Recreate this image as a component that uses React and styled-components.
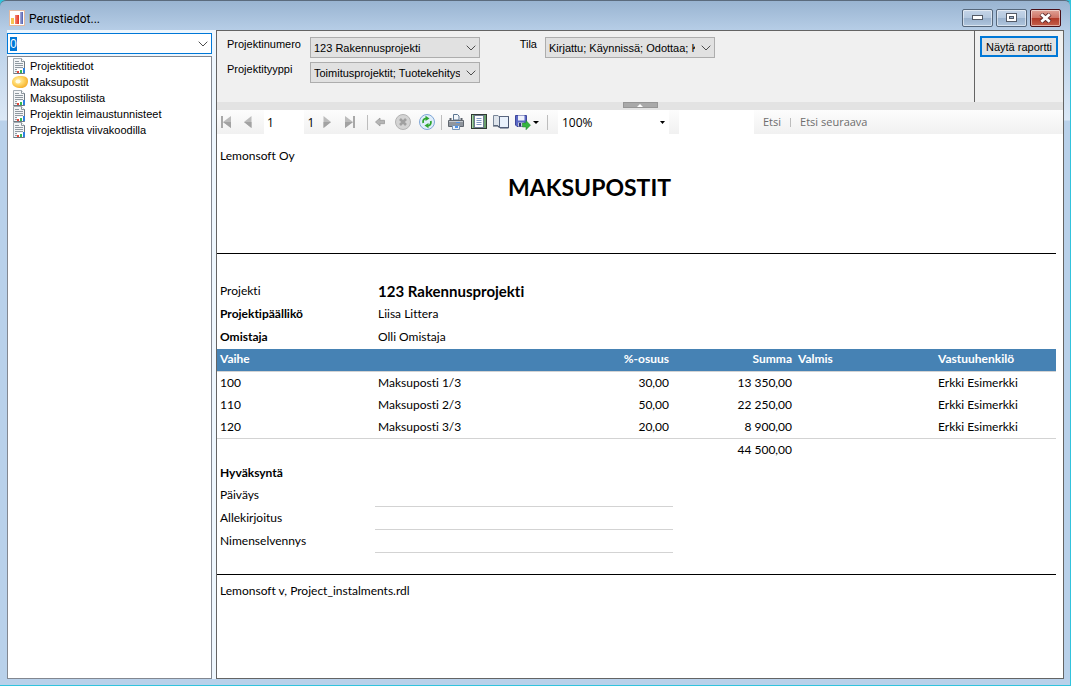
import React, { Component, createRef } from "react";
import styled, { createGlobalStyle } from "styled-components";

const GlobalStyle = createGlobalStyle`
  * {
    box-sizing: border-box;
  }
  body {
    margin: 0;
    background: #31c3dd;
  }
  button, input, select {
    font: inherit;
    color: inherit;
    margin: 0;
    padding: 0;
    border: 0;
    border-radius: 0;
    background: none;
    outline: none;
  }
`;

const Window = styled.div`
  display: flex;
  flex-direction: column;
  min-height: 100vh;
  padding: 0 6px 6px 7px;
  border-top: 1px solid #5b6b7d;
  border-right: 1px solid #31c3dd;
  border-bottom: 1px solid #31c3dd;
  border-radius: 6px 6px 0 0;
  background: linear-gradient(#99b4d1, #b7cee7 30px, #dbe8f6 119px, #b9d1ea 120px);
  font-family: "Liberation Sans", Arial, sans-serif;
  font-size: 11px;
  color: #000;
`;

const TitleBar = styled.header`
  display: flex;
  align-items: center;
  height: 29px;
  padding: 4px 3px 0 2px;
`;

const Title = styled.h1`
  flex: 1;
  margin: 0 0 0 4px;
  padding-top: 2px;
  font-family: Roboto, sans-serif;
  font-size: 12px;
  font-weight: 400;
`;

const WindowButtons = styled.div`
  display: flex;
  gap: 3px;
`;

const WindowButton = styled.button`
  display: flex;
  align-items: center;
  justify-content: center;
  width: 31px;
  height: 18px;
  border: 1px solid ${p => (p.$close ? "#4a1018" : "#56677b")};
  border-radius: 2px;
  box-shadow: inset 0 0 0 1px rgba(255, 255, 255, 0.5);
  background: ${p =>
    p.$close
      ? "linear-gradient(#dfa397, #cf7466 48%, #b13a28 52%, #c4604c)"
      : "linear-gradient(#c5d5e8, #b4c8df 48%, #9ab2cd 52%, #b0c6de)"};
`;

const Client = styled.div`
  display: flex;
  flex: 1;
  gap: 4px;
  background: #eef6fd;
`;

const Sidebar = styled.aside`
  display: flex;
  flex-direction: column;
  gap: 2px;
  width: 205px;
  padding-top: 3px;
`;

const Combo = styled.div`
  display: flex;
  align-items: center;
  height: 21px;
  padding: 0 2px;
  border: 1px solid #0078d7;
  background: #fff;
`;

const ComboInput = styled.input`
  flex: 1;
  min-width: 0;
  height: 15px;
  font-size: 12px;
  &::selection {
    background: #0078d7;
    color: #fff;
  }
`;

const ComboButton = styled.button`
  display: flex;
  align-items: center;
  justify-content: center;
  width: 12px;
`;

const ReportList = styled.ul`
  flex: 1;
  margin: 0;
  padding: 1px 0 0 4px;
  border: 1px solid #828790;
  background: #fff;
  list-style: none;
`;

const ReportItem = styled.li`
  display: flex;
  align-items: center;
  gap: 2px;
  height: 16px;
  white-space: nowrap;
`;

const Main = styled.main`
  display: flex;
  flex: 1;
  flex-direction: column;
  min-width: 0;
  border: 1px solid #646464;
  background: #fff;
`;

const Params = styled.form`
  display: flex;
  background: #f0f0f0;
`;

const ParamGrid = styled.div`
  display: grid;
  flex: 1;
  grid-template-columns: 83px 170px 65px 170px;
  grid-auto-rows: 21px;
  row-gap: 4px;
  padding: 6px 0 19px 10px;
`;

const ParamLabel = styled.label`
  padding-right: 8px;
  line-height: 14px;
  text-align: ${p => p.$align || "left"};
`;

const SelectBox = styled.div`
  position: relative;
  > svg {
    position: absolute;
    top: 8px;
    right: 4px;
    pointer-events: none;
  }
`;

const Select = styled.select`
  width: 100%;
  height: 21px;
  padding: 0 19px 0 3px;
  border: 1px solid #adadad;
  background: #e1e1e1;
  appearance: none;
`;

const ParamAction = styled.div`
  width: 89px;
  padding: 5px;
  border-left: 1px solid #646464;
`;

const ViewButton = styled.button`
  width: 78px;
  height: 21px;
  border: 2px solid #0078d7;
  background: #e1e1e1;
  white-space: nowrap;
`;

const Splitter = styled.div`
  display: flex;
  justify-content: center;
  height: 8px;
  background: #e3e3e3;
`;

const SplitterHandle = styled.button`
  display: flex;
  align-items: center;
  justify-content: center;
  width: 35px;
  height: 6px;
  border: 1px solid #969696;
  background: #a9a9a9;
`;

const Toolbar = styled.div`
  display: flex;
  align-items: center;
  height: 24px;
  background: linear-gradient(#fdfdfd, #f1f1f1);
  font-family: "Open Sans", "Noto Sans", sans-serif;
  font-size: 12px;
`;

const ToolButton = styled.button`
  display: flex;
  align-items: center;
  justify-content: center;
  width: ${p => p.$width || 18}px;
  height: 24px;
`;

const ToolSeparator = styled.span`
  width: 1px;
  height: ${p => (p.$small ? 9 : 15)}px;
  margin: 0 ${p => p.$gap ?? 3}px;
  background: #bdbdbd;
`;

const PageInput = styled.input`
  width: 40px;
  height: 24px;
  margin-left: 3px;
  padding-left: 3px;
  background: #fff;
`;

const PageTotal = styled.span`
  width: 14px;
  text-align: center;
`;

const ZoomBox = styled(SelectBox)`
  width: 111px;
  margin: 0 10px 0 7px;
  > svg {
    top: 11px;
  }
`;

const ZoomSelect = styled(Select)`
  height: 24px;
  padding-left: 4px;
  border: 0;
  background: #fff;
`;

const FindInput = styled.input`
  width: 75px;
  height: 24px;
  background: #fff;
`;

const FindButton = styled.button`
  padding: 0 9px 1px;
  color: #6d6d6d;
  font-size: 11px;
`;

const Report = styled.article`
  flex: 1;
  margin-right: 7px;
  font-family: Lato, Carlito, Calibri, sans-serif;
  font-size: 12px;
  font-variant-ligatures: none;
  line-height: 16px;
`;

const ReportHead = styled.header`
  height: 120px;
  padding: 14px 3px 0;
  border-bottom: 1px solid #000;
`;

const Company = styled.p`
  margin: 0;
`;

const ReportTitle = styled.h2`
  margin: 7px 94px 0 0;
  font-size: 23px;
  line-height: 32px;
  text-align: center;
`;

const Facts = styled.dl`
  display: grid;
  grid-template-columns: 158px 1fr;
  grid-auto-rows: 23px;
  align-items: center;
  margin: 0;
  padding: 25px 3px 1px;
`;

const FactLabel = styled.dt`
  font-weight: ${p => (p.$bold ? 700 : 400)};
`;

const FactValue = styled.dd`
  margin: 0;
  font-size: ${p => (p.$large ? 15 : 12)}px;
  font-weight: ${p => (p.$large ? 700 : 400)};
`;

const Table = styled.table`
  width: 100%;
  table-layout: fixed;
  border-collapse: separate;
  border-spacing: 0;
`;

const Col = styled.col`
  width: ${p => (p.$width ? p.$width + "px" : "auto")};
`;

const HeadCell = styled.th`
  height: 23px;
  padding: 0 3px 2px;
  border-bottom: 1px solid #d3d3d3;
  background: #4682b4;
  background-clip: padding-box;
  color: #fff;
  text-align: ${p => p.$align || "left"};
`;

const Cell = styled.td`
  height: 22px;
  padding: 0 3px;
  text-align: ${p => p.$align || "left"};
`;

const Foot = styled.tfoot`
  td {
    height: 23px;
    border-top: 1px solid #d3d3d3;
  }
`;

const Approval = styled.section`
  padding: 0 3px 21px;
  border-bottom: 1px solid #000;
`;

const ApprovalTitle = styled.h3`
  margin: 0;
  font-size: 12px;
  line-height: 23px;
`;

const ApprovalRow = styled.div`
  display: grid;
  grid-template-columns: 155px 298px;
  line-height: 22px;
`;

const SignLine = styled.span`
  height: 23px;
  border-bottom: 1px solid #d3d3d3;
`;

const ReportFoot = styled.footer`
  padding: 8px 3px;
`;

const AppIcon = () => (
  <svg width="16" height="16" viewBox="0 0 16 16">
    <defs>
      <linearGradient id="barRed" x2="1">
        <stop offset="0" stopColor="#f58a78" />
        <stop offset="1" stopColor="#e23322" />
      </linearGradient>
      <linearGradient id="barBlue" x2="1">
        <stop offset="0" stopColor="#a9aedb" />
        <stop offset="1" stopColor="#4f5cae" />
      </linearGradient>
    </defs>
    <rect x="0.5" y="0.5" width="15" height="15" fill="#fff" stroke="#e3b9a0" />
    <rect x="2" y="8" width="3" height="6" fill="#f6c552" />
    <rect x="6" y="5" width="4" height="9" fill="url(#barRed)" />
    <rect x="11" y="2" width="3" height="12" fill="url(#barBlue)" />
  </svg>
);

const DocIcon = () => (
  <svg width="16" height="16" viewBox="0 0 16 16">
    <path d="M1.500 .5h8l3 3v12h-11z" fill="#f3f5f7" stroke="#a3abb2" />
    <path d="M9.500 .5v3h3" fill="#fff" stroke="#8d979f" />
    <path d="M3 3.500h4M3 5.500h8M3 7.500h8M3 9.500h8M3 11.500h2M3 13.500h2" stroke="#9099a1" />
    <path d="M12.500 3.500v12h-11" fill="none" stroke="#6d7881" />
    <rect x="5" y="11" width="8" height="4" fill="#fff" />
    <rect x="5" y="13" width="2" height="2" fill="#e8483a" />
    <rect x="8" y="12" width="2" height="3" fill="#35b854" />
    <rect x="11" y="10" width="2" height="5" fill="#2f7fe0" />
  </svg>
);

const CoinIcon = () => (
  <svg width="16" height="16" viewBox="0 0 16 16">
    <defs>
      <radialGradient id="coin" cx="0.4" cy="0.4" r="0.7">
        <stop offset="0" stopColor="#fff3bd" />
        <stop offset="0.45" stopColor="#ffd768" />
        <stop offset="1" stopColor="#f3a71f" />
      </radialGradient>
    </defs>
    <path
      d="M0 8c0-4 4-6 8-6 5 0 8 1 8 5 0 4.500-3 7-7 7-5 0-9-2-9-6z"
      fill="url(#coin)"
    />
    <ellipse cx="6" cy="7.500" rx="2.500" ry="2" fill="#fffbe6" />
  </svg>
);

const Chevron = () => (
  <svg width="10" height="6" viewBox="0 0 10 6" fill="none" stroke="#4c4c4c">
    <path d="M.7 .7L5 5 9.300 .7" />
  </svg>
);

const Caret = () => (
  <svg width="5" height="3" viewBox="0 0 5 3">
    <path d="M0 0h5L2.500 3z" fill="#000" />
  </svg>
);

const ArrowIcon = ({ bar, flip }) => (
  <svg width="12" height="14" viewBox="0 0 12 14">
    <g transform={flip ? "matrix(-1 0 0 1 12 0)" : undefined} fill="#bcbcbc">
      {bar && <path d="M1 1h2v12H1z" fill="#a8a8a8" />}
      <path d={bar ? "M11 1v12L3 7z" : "M9.500 1v12L2 7z"} />
      <path d={bar ? "M11 7v6L3 7z" : "M9.500 7v6L2 7z"} fill="#a2a2a2" />
    </g>
  </svg>
);

const BackIcon = () => (
  <svg width="10" height="10" viewBox="0 0 10 10">
    <path d="M.5 5L5 1v2.300h4.500v3.400H5V9z" fill="#b5b5b5" stroke="#999" strokeWidth=".8" />
  </svg>
);

const StopIcon = () => (
  <svg width="16" height="16" viewBox="0 0 16 16">
    <circle cx="8" cy="8" r="7.500" fill="#d4d4d4" stroke="#b3b3b3" />
    <path d="M5 5l6 6M11 5l-6 6" stroke="#a0a0a0" strokeWidth="2.600" />
  </svg>
);

const RefreshIcon = () => (
  <svg width="16" height="16" viewBox="0 0 16 16">
    <circle cx="8" cy="8" r="7.500" fill="#e0eefb" stroke="#7fa6d6" />
    <path d="M4.200 9C3.600 6 5 4.300 7.500 4.300" fill="none" stroke="#2fa52f" strokeWidth="1.800" />
    <path d="M6.500 1.800L10.500 4.400 6.500 7z" fill="#2fa52f" />
    <path d="M11.800 7c.6 3-.8 4.700-3.300 4.700" fill="none" stroke="#2fa52f" strokeWidth="1.800" />
    <path d="M9.500 9v5.200l-4-2.600z" fill="#2fa52f" />
  </svg>
);

const PrintIcon = () => (
  <svg width="16" height="16" viewBox="0 0 16 16">
    <path d="M5.500 .5h4l1.500 1.500V6H5.500z" fill="#f3f7fb" stroke="#5c7590" />
    <path d="M2.500 4v4M13.500 4v4" stroke="#5c626b" strokeWidth="2" />
    <path d="M.5 6.500h15v6H.5z" fill="#8f959d" stroke="#61676f" />
    <path d="M1 7.500h14" stroke="#c3c8ce" />
    <path d="M8 8.500h4" stroke="#4d92ea" />
    <path d="M4.500 11.500h7v4h-7z" fill="#eaf3fc" stroke="#7894b5" />
    <path d="M7 13h3" stroke="#4d92ea" strokeWidth="2" />
  </svg>
);

const LayoutIcon = () => (
  <svg width="16" height="16" viewBox="0 0 16 16">
    <rect x=".5" y=".5" width="15" height="14" fill="#69a06c" stroke="#303a33" />
    <path d="M1.500 1v13" stroke="#a8d3a8" />
    <rect x="3.500" y="1.500" width="9" height="12" fill="#fdfeff" stroke="#6c7890" />
    <path d="M5.500 4.500h5M5.500 6.500h5M5.500 8.500h5M5.500 10.500h5" stroke="#7f97c2" />
  </svg>
);

const SetupIcon = () => (
  <svg width="16" height="16" viewBox="0 0 16 16">
    <path d="M.5 1.500H5l1.500 1.500v10.500l-1.500-2H.5z" fill="#dfe5ec" stroke="#7a8799" />
    <path d="M0 12h5l1.500 2" fill="none" stroke="#3f4a60" />
    <rect x="6.500" y="2.500" width="9" height="11" fill="#e9f1fc" stroke="#5a6780" />
    <path d="M15.500 3v11H7" fill="none" stroke="#475470" />
  </svg>
);

const SaveIcon = () => (
  <svg width="24" height="16" viewBox="0 0 24 16">
    <path d="M.5 1.500h11v11H2l-1.500-1.500z" fill="#5a67c4" stroke="#3e479b" />
    <rect x="3" y="1.500" width="6.500" height="5" fill="#eef1fb" />
    <rect x="3" y="8.500" width="6" height="4" fill="#c3cadb" />
    <rect x="4" y="9" width="2" height="3.500" fill="#2c3372" />
    <path d="M7.500 9h3.500V6.500l4.500 4.700-4.500 4.600V13H7.500z" fill="#35b53f" stroke="#1f8129" strokeWidth=".5" />
    <path d="M18 7h6l-3 3z" fill="#000" />
  </svg>
);

const MinimizeIcon = () => (
  <svg width="11" height="5" viewBox="0 0 11 5">
    <rect x=".5" y=".5" width="10" height="4" fill="#fff" stroke="#535a66" />
  </svg>
);

const MaximizeIcon = () => (
  <svg width="11" height="9" viewBox="0 0 11 9">
    <rect x=".5" y=".5" width="10" height="8" fill="#fff" stroke="#535a66" />
    <rect x="3.500" y="3.500" width="4" height="2" fill="#9ab2cd" stroke="#535a66" />
  </svg>
);

const CloseIcon = () => (
  <svg width="13" height="10" viewBox="0 0 13 10">
    <path d="M2 1l9 8M11 1L2 9" stroke="#5d2a2c" strokeWidth="4.500" />
    <path d="M2.300 1.200l8.400 7.600M10.700 1.200L2.300 8.800" stroke="#fff" strokeWidth="2.800" />
  </svg>
);

const REPORTS = [
  "Projektitiedot",
  "Maksupostit",
  "Maksupostilista",
  "Projektin leimaustunnisteet",
  "Projektlista viivakoodilla"
];

const PARAMS = [
  { id: "number", label: "Projektinumero", value: "123 Rakennusprojekti" },
  {
    id: "state",
    label: "Tila",
    value: "Kirjattu; Käynnissä; Odottaa; Keskeytetty",
    align: "right"
  },
  {
    id: "type",
    label: "Projektityyppi",
    value: "Toimitusprojektit; Tuotekehitysprojektit"
  }
];

const PHASES = [
  { id: "100", name: "Maksuposti 1/3", share: "30,00", sum: "13 350,00" },
  { id: "110", name: "Maksuposti 2/3", share: "50,00", sum: "22 250,00" },
  { id: "120", name: "Maksuposti 3/3", share: "20,00", sum: "8 900,00" }
];

class App extends Component {
  combo = createRef();

  componentDidMount() {
    this.combo.current.focus();
    this.combo.current.select();
  }

  render() {
    return (
      <>
        <GlobalStyle />
        <Window>
          <TitleBar>
            <AppIcon />
            <Title>Perustiedot...</Title>
            <WindowButtons>
              <WindowButton aria-label="Pienennä">
                <MinimizeIcon />
              </WindowButton>
              <WindowButton aria-label="Suurenna">
                <MaximizeIcon />
              </WindowButton>
              <WindowButton $close aria-label="Sulje">
                <CloseIcon />
              </WindowButton>
            </WindowButtons>
          </TitleBar>
          <Client>
            <Sidebar>
              <Combo>
                <ComboInput ref={this.combo} aria-label="Haku" defaultValue="0" />
                <ComboButton aria-label="Avaa">
                  <Chevron />
                </ComboButton>
              </Combo>
              <ReportList>
                {REPORTS.map(name => (
                  <ReportItem key={name}>
                    {name === "Maksupostit" ? <CoinIcon /> : <DocIcon />}
                    {name}
                  </ReportItem>
                ))}
              </ReportList>
            </Sidebar>
            <Main>
              <Params onSubmit={e => e.preventDefault()}>
                <ParamGrid>
                  {PARAMS.map(({ id, label, value, align }) => (
                    <React.Fragment key={id}>
                      <ParamLabel htmlFor={id} $align={align}>
                        {label}
                      </ParamLabel>
                      <SelectBox>
                        <Select id={id}>
                          <option>{value}</option>
                        </Select>
                        <Chevron />
                      </SelectBox>
                    </React.Fragment>
                  ))}
                </ParamGrid>
                <ParamAction>
                  <ViewButton type="submit">Näytä raportti</ViewButton>
                </ParamAction>
              </Params>
              <Splitter>
                <SplitterHandle aria-label="Piilota parametrit">
                  <svg width="6" height="3" viewBox="0 0 6 3">
                    <path d="M0 3h6L3 0z" fill="#fff" />
                  </svg>
                </SplitterHandle>
              </Splitter>
              <Toolbar>
                <ToolButton aria-label="Ensimmäinen sivu">
                  <ArrowIcon bar />
                </ToolButton>
                <ToolButton $width={26} aria-label="Edellinen sivu">
                  <ArrowIcon />
                </ToolButton>
                <PageInput aria-label="Sivu" defaultValue="1" />
                <PageTotal>1</PageTotal>
                <ToolButton aria-label="Seuraava sivu">
                  <ArrowIcon flip />
                </ToolButton>
                <ToolButton $width={28} aria-label="Viimeinen sivu">
                  <ArrowIcon bar flip />
                </ToolButton>
                <ToolSeparator />
                <ToolButton aria-label="Takaisin">
                  <BackIcon />
                </ToolButton>
                <ToolButton $width={28} aria-label="Pysäytä">
                  <StopIcon />
                </ToolButton>
                <ToolButton $width={20} aria-label="Päivitä">
                  <RefreshIcon />
                </ToolButton>
                <ToolSeparator $gap={4} />
                <ToolButton $width={20} aria-label="Tulosta">
                  <PrintIcon />
                </ToolButton>
                <ToolButton $width={26} aria-label="Tulostusasettelu">
                  <LayoutIcon />
                </ToolButton>
                <ToolButton aria-label="Sivun asetukset">
                  <SetupIcon />
                </ToolButton>
                <ToolButton $width={34} aria-label="Vie">
                  <SaveIcon />
                </ToolButton>
                <ToolSeparator />
                <ZoomBox>
                  <ZoomSelect aria-label="Zoomaus">
                    <option>100%</option>
                  </ZoomSelect>
                  <Caret />
                </ZoomBox>
                <FindInput aria-label="Etsittävä teksti" />
                <FindButton>Etsi</FindButton>
                <ToolSeparator $small $gap={0} />
                <FindButton>Etsi seuraava</FindButton>
              </Toolbar>
              <Report>
                <ReportHead>
                  <Company>Lemonsoft Oy</Company>
                  <ReportTitle>MAKSUPOSTIT</ReportTitle>
                </ReportHead>
                <Facts>
                  <FactLabel>Projekti</FactLabel>
                  <FactValue $large>123 Rakennusprojekti</FactValue>
                  <FactLabel $bold>Projektipäällikö</FactLabel>
                  <FactValue>Liisa Littera</FactValue>
                  <FactLabel $bold>Omistaja</FactLabel>
                  <FactValue>Olli Omistaja</FactValue>
                </Facts>
                <Table>
                  <colgroup>
                    <Col $width={158} />
                    <Col $width={160} />
                    <Col $width={137} />
                    <Col $width={123} />
                    <Col $width={140} />
                    <Col />
                  </colgroup>
                  <thead>
                    <tr>
                      <HeadCell>Vaihe</HeadCell>
                      <HeadCell />
                      <HeadCell $align="right">%-osuus</HeadCell>
                      <HeadCell $align="right">Summa</HeadCell>
                      <HeadCell>Valmis</HeadCell>
                      <HeadCell>Vastuuhenkilö</HeadCell>
                    </tr>
                  </thead>
                  <tbody>
                    {PHASES.map(phase => (
                      <tr key={phase.id}>
                        <Cell>{phase.id}</Cell>
                        <Cell>{phase.name}</Cell>
                        <Cell $align="right">{phase.share}</Cell>
                        <Cell $align="right">{phase.sum}</Cell>
                        <Cell />
                        <Cell>Erkki Esimerkki</Cell>
                      </tr>
                    ))}
                  </tbody>
                  <Foot>
                    <tr>
                      <Cell colSpan={3} />
                      <Cell $align="right">44 500,00</Cell>
                      <Cell colSpan={2} />
                    </tr>
                  </Foot>
                </Table>
                <Approval>
                  <ApprovalTitle>Hyväksyntä</ApprovalTitle>
                  {["Päiväys", "Allekirjoitus", "Nimenselvennys"].map(label => (
                    <ApprovalRow key={label}>
                      <span>{label}</span>
                      <SignLine />
                    </ApprovalRow>
                  ))}
                </Approval>
                <ReportFoot>Lemonsoft v, Project_instalments.rdl</ReportFoot>
              </Report>
            </Main>
          </Client>
        </Window>
      </>
    );
  }
}

export default App;
